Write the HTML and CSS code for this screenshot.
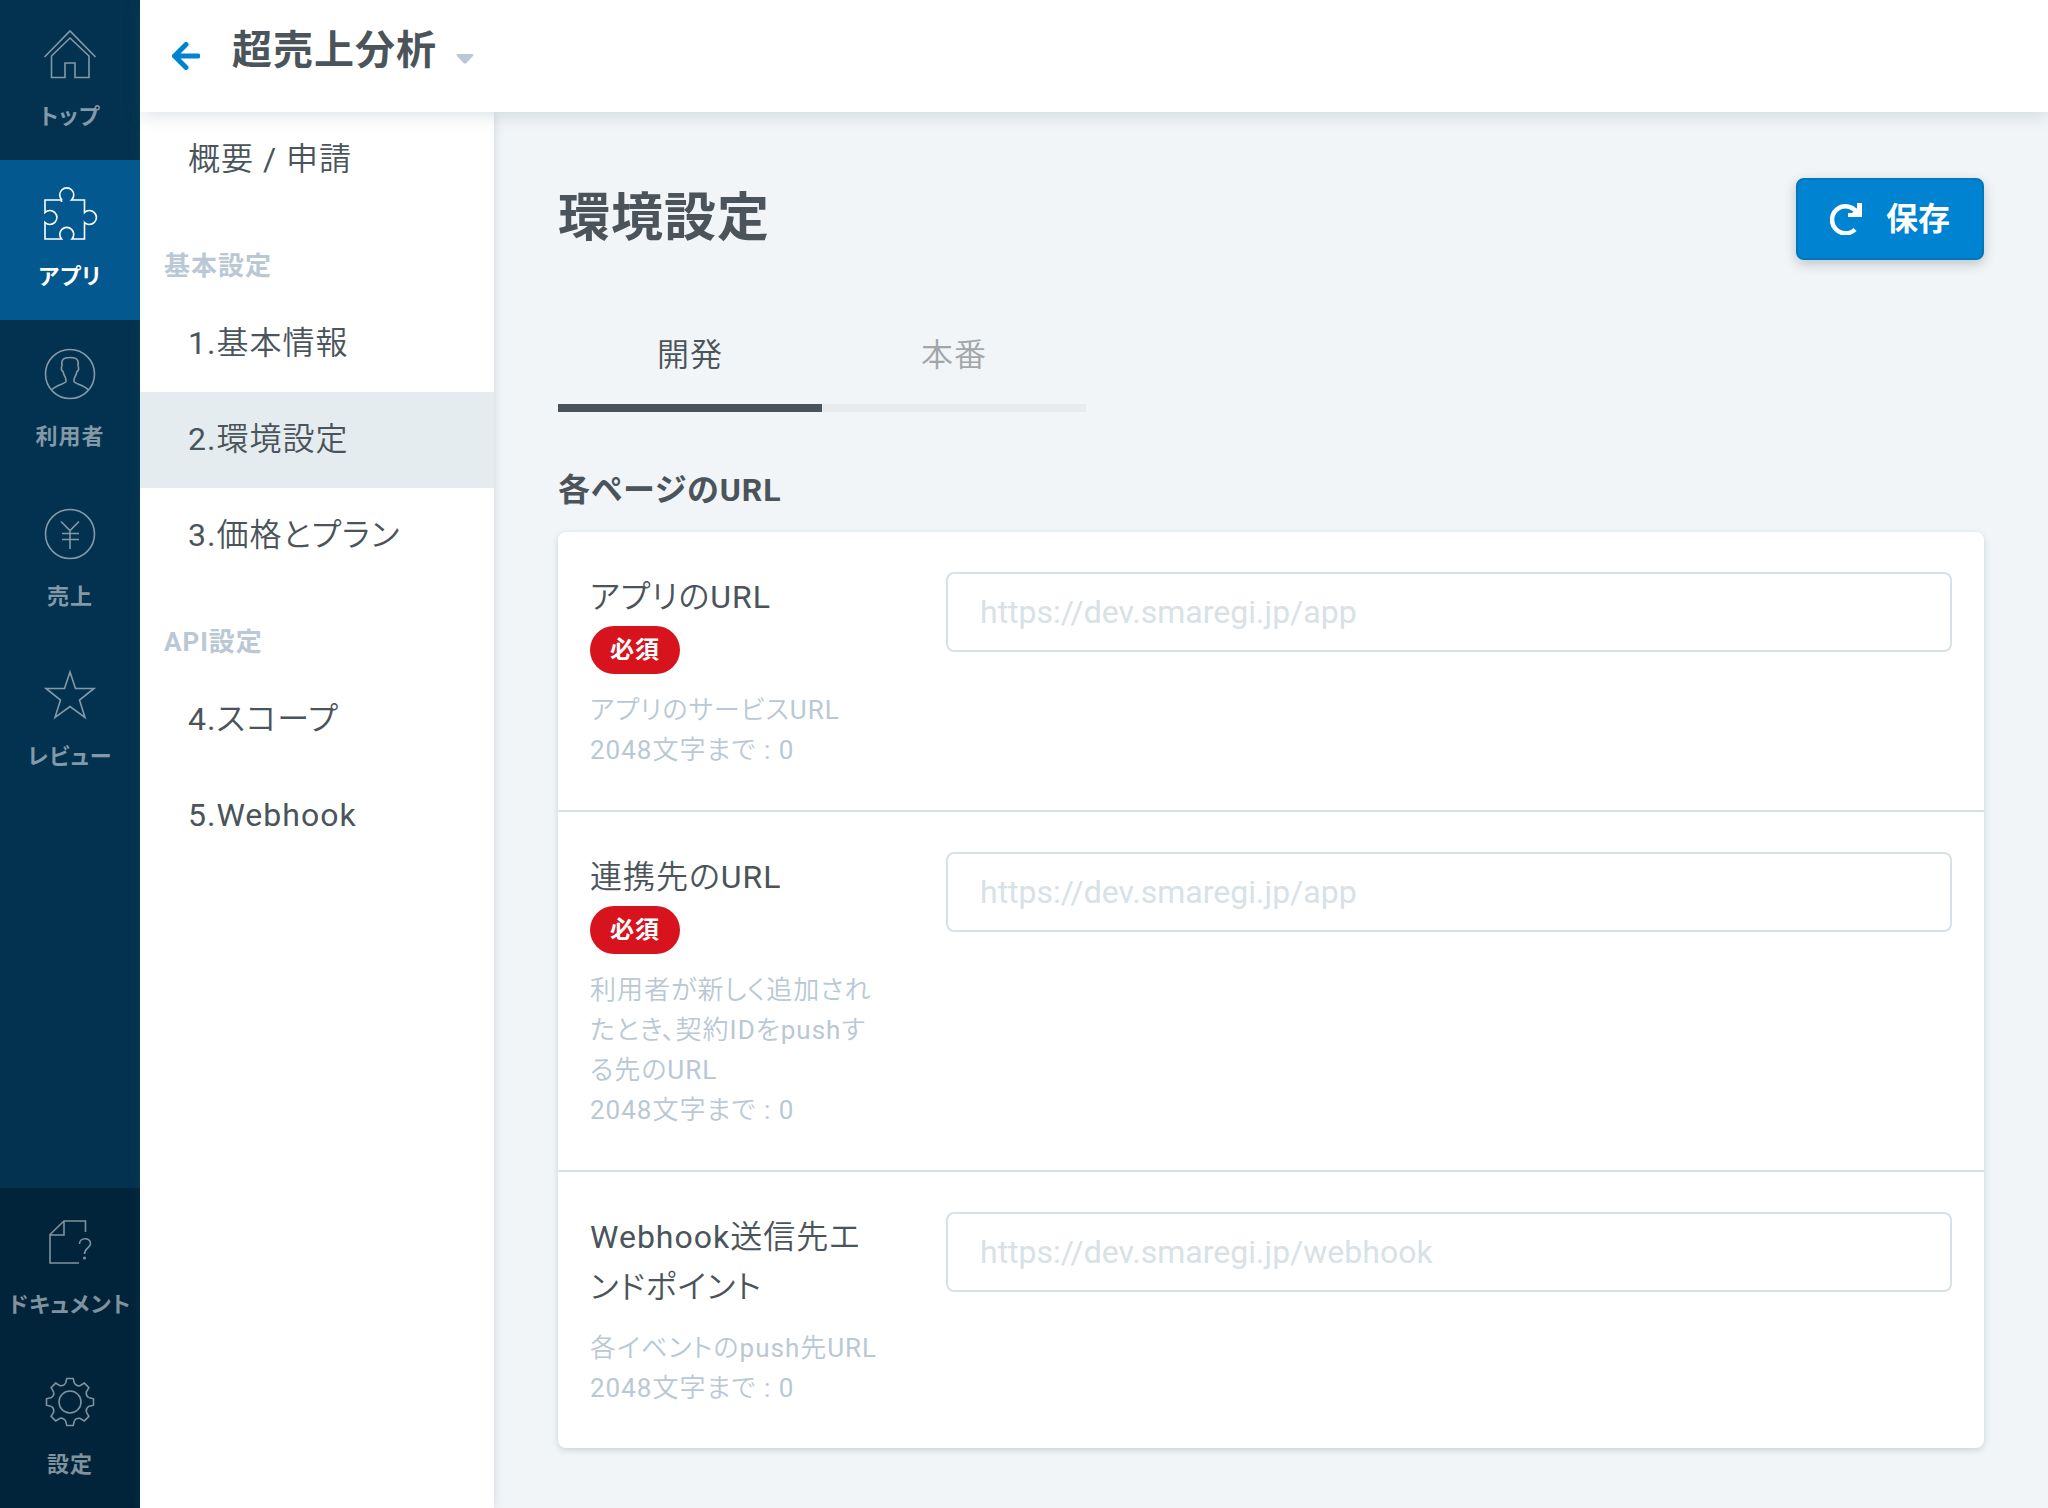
FILE: index.html
```html
<!DOCTYPE html>
<html lang="ja">
<head>
<meta charset="utf-8">
<meta name="viewport" content="width=device-width, initial-scale=1">
<title>環境設定 - 超売上分析</title>
<link rel="stylesheet" href="styles.css">
</head>
<body>
<div class="app">
  <nav class="rail" aria-label="メイン">
    <div class="rail-group">
      <a class="rail-item" href="#top">
        <svg class="rail-icon" viewBox="42 26 56 56"><path d="M44.5 57 70 31l25.500 26M51.500 56v21.500H65V63h10v14.500h14V56L70 38Z"/></svg>
        <span>トップ</span>
      </a>
      <a class="rail-item is-active" href="#apps" aria-current="page">
        <svg class="rail-icon" viewBox="42 26 56 56"><path d="M61.500 42V40H45V52.500A7 7 0 1 1 45 62.500V79H61.500A7 7 0 1 1 72 79H84.500V62.500A7 7 0 1 0 84.500 52.500V40H71.500A7 7 0 1 0 62 40"/></svg>
        <span>アプリ</span>
      </a>
      <a class="rail-item" href="#users">
        <svg class="rail-icon" viewBox="42 26 56 56"><circle cx="70" cy="54" r="24.500"/><path d="M52 69.500C56 65 65 64 66 61.500C66.500 57 64.500 58 63 51.500C61 50.500 61.500 47 62 45.500C61 40 63 37.500 70 37.500C77 37.500 79 40 78 45.500C78.500 47 79 50.500 77 51.500C75.500 58 73.500 57 74 61.500C75 64 84 65 88 69.500"/></svg>
        <span>利用者</span>
      </a>
      <a class="rail-item" href="#sales">
        <svg class="rail-icon" viewBox="42 26 56 56"><circle cx="70" cy="54" r="24.500"/><path d="M61 41.500 70 50.500 79 41.500M70 50.500V69M62 53.500H79M62 59.500H79"/></svg>
        <span>売上</span>
      </a>
      <a class="rail-item" href="#reviews">
        <svg class="rail-icon" viewBox="42 26 56 56"><path d="M70 32 75.500 48.500H94L79.500 60 85 77.500 70 66.500 55 77.500 60.500 60 46 48.500H64.500Z"/></svg>
        <span>レビュー</span>
      </a>
    </div>
    <div class="rail-group rail-group-bottom">
      <a class="rail-item" href="#docs">
        <svg class="rail-icon" viewBox="42 26 56 56"><path d="M79 75H50V46.500L64 33H85.500V44M64 33V47H50M79.500 56C79.500 49 90.500 49 90.500 55.500C90.500 60 84.500 60 84.500 66"/><circle class="dot" cx="84.500" cy="70" r="1.500"/></svg>
        <span>ドキュメント</span>
      </a>
      <a class="rail-item" href="#settings">
        <svg class="rail-icon" viewBox="-28 -28 56 56">
          <defs><path id="tooth" d="M-4.500-18.500-3.200-23.500H3.200L4.500-18.500Q7-15.500 9.900-16.300"/></defs>
          <circle r="11"/>
          <use href="#tooth"/><use href="#tooth" transform="rotate(45)"/><use href="#tooth" transform="rotate(90)"/><use href="#tooth" transform="rotate(135)"/><use href="#tooth" transform="rotate(180)"/><use href="#tooth" transform="rotate(225)"/><use href="#tooth" transform="rotate(270)"/><use href="#tooth" transform="rotate(315)"/>
        </svg>
        <span>設定</span>
      </a>
    </div>
  </nav>

  <div class="workspace">
    <header class="topbar">
      <a class="back" href="#apps" aria-label="戻る">
        <svg class="back-icon" viewBox="0 0 28 28"><path d="M14 2.500 2.500 14 14 25.500M3 14H26"/></svg>
      </a>
      <button class="app-switch" type="button" aria-haspopup="true">
        <span>超売上分析</span>
        <svg class="caret" viewBox="0 0 18 10"><path d="M1.500 0H16.500Q18 .5 17 2L10.500 9Q9 10.500 7.500 9L1 2Q0 .5 1.500 0Z"/></svg>
      </button>
    </header>

    <div class="body">
      <nav class="subnav" aria-label="アプリ設定">
        <a class="subnav-link" href="#overview">概要 / 申請</a>
        <h2 class="subnav-title">基本設定</h2>
        <a class="subnav-link" href="#basic">1.基本情報</a>
        <a class="subnav-link is-current" href="#env" aria-current="page">2.環境設定</a>
        <a class="subnav-link" href="#plan">3.価格とプラン</a>
        <h2 class="subnav-title">API設定</h2>
        <a class="subnav-link" href="#scope">4.スコープ</a>
        <a class="subnav-link" href="#webhook">5.Webhook</a>
      </nav>

      <main class="content">
        <div class="page-head">
          <h1 class="page-title">環境設定</h1>
          <button class="save" type="submit" form="env-form">
            <svg class="save-icon" viewBox="0 0 32 32"><path class="arc" d="M25 26.500A13.500 13.500 0 1 1 26.500 9"/><path class="head" d="M27 0H32V14H18V10H22L27 5Z"/></svg>
            <span>保存</span>
          </button>
        </div>

        <div class="tabs" role="tablist">
          <button class="tab is-selected" type="button" role="tab" aria-selected="true">開発</button>
          <button class="tab" type="button" role="tab" aria-selected="false">本番</button>
        </div>

        <h2 class="section-title">各ページのURL</h2>
        <form class="card" id="env-form">
          <div class="row">
            <div class="row-info">
              <label class="row-label" for="app-url">アプリのURL</label>
              <span class="badge">必須</span>
              <p class="help">アプリのサービスURL<br>2048文字まで : 0</p>
            </div>
            <input class="field" id="app-url" type="url" placeholder="https://dev.smaregi.jp/app">
          </div>
          <div class="row">
            <div class="row-info">
              <label class="row-label" for="link-url">連携先のURL</label>
              <span class="badge">必須</span>
              <p class="help">利用者が新しく追加されたとき、契約IDをpushする先のURL<br>2048文字まで : 0</p>
            </div>
            <input class="field" id="link-url" type="url" placeholder="https://dev.smaregi.jp/app">
          </div>
          <div class="row">
            <div class="row-info">
              <label class="row-label" for="hook-url">Webhook送信先エンドポイント</label>
              <p class="help">各イベントのpush先URL<br>2048文字まで : 0</p>
            </div>
            <input class="field" id="hook-url" type="url" placeholder="https://dev.smaregi.jp/webhook">
          </div>
        </form>
      </main>
    </div>
  </div>
</div>
</body>
</html>
```
FILE: styles.css
```css
:root {
  --font-text: Roboto, "Noto Sans CJK JP DemiLight", "Noto Sans CJK JP Light", "Noto Sans CJK JP", sans-serif;
  --font-strong: Roboto, "Noto Sans CJK JP", sans-serif;
}

* {
  box-sizing: border-box;
}

body {
  margin: 0;
  background: #f1f5f8;
  color: #4a545a;
  font-family: var(--font-text);
  font-size: 32px;
  font-feature-settings: "palt";
  letter-spacing: 1px;
}

a {
  color: inherit;
  text-decoration: none;
}

h1,
h2,
p {
  margin: 0;
}

button {
  border: 0;
  background: none;
  color: inherit;
  font: inherit;
  font-feature-settings: inherit;
  cursor: pointer;
}

svg {
  display: block;
  flex: none;
  fill: none;
}

.app {
  display: flex;
  min-height: 100vh;
}

/* Main navigation rail */

.rail {
  display: flex;
  flex: none;
  flex-direction: column;
  justify-content: space-between;
  width: 140px;
  background: #02324f;
  color: #8499a7;
}

.rail-group-bottom {
  background: #01243a;
  color: #80929d;
}

.rail-item {
  display: flex;
  flex-direction: column;
  align-items: center;
  gap: 19px;
  height: 160px;
  padding-top: 26px;
  font-family: var(--font-strong);
  font-size: 22px;
  font-weight: 700;
  line-height: 32px;
  white-space: nowrap;
}

.rail-item.is-active {
  background: #03598f;
  color: #fff;
}

.rail-icon {
  width: 56px;
  height: 56px;
  stroke: currentColor;
  stroke-width: 1.6;
}

.dot {
  fill: currentColor;
  stroke: none;
}

/* Top bar */

.workspace {
  display: flex;
  flex: 1;
  flex-direction: column;
  min-width: 0;
}

.topbar {
  display: flex;
  align-items: center;
  gap: 32px;
  position: relative;
  z-index: 1;
  height: 112px;
  padding: 0 32px;
  background: #fff;
  box-shadow: 0 4px 16px rgba(74, 100, 115, 0.18);
}

.back-icon {
  width: 28px;
  height: 28px;
  stroke: #0084d1;
  stroke-width: 5;
  stroke-linecap: round;
}

.app-switch {
  display: flex;
  align-items: center;
  gap: 19px;
  padding: 0 0 10px;
  font-family: var(--font-strong);
  font-size: 40px;
  font-weight: 700;
  line-height: 56px;
  letter-spacing: 1px;
}

.caret {
  width: 18px;
  height: 10px;
  margin-top: 16px;
  fill: #b9c8d4;
}

/* App settings navigation */

.body {
  display: flex;
  flex: 1;
}

.subnav {
  flex: none;
  width: 354px;
  background: #fff;
  box-shadow: 0 0 10px rgba(74, 100, 115, 0.2);
}

.subnav-link {
  display: block;
  padding: 0 48px 2px;
  line-height: 94px;
}

.subnav-link.is-current {
  background: #e5ecef;
}

.subnav-title {
  padding: 38px 24px 10px;
  color: #b9c8d4;
  font-family: var(--font-strong);
  font-size: 26px;
  font-weight: 700;
  line-height: 40px;
}

/* Page content */

.content {
  flex: 1;
  min-width: 0;
  padding: 66px 64px 60px;
}

.page-head {
  display: flex;
  align-items: center;
  justify-content: space-between;
}

.page-title {
  font-family: var(--font-strong);
  font-size: 52px;
  font-weight: 700;
  line-height: 82px;
}

.save {
  display: flex;
  align-items: center;
  gap: 24px;
  height: 82px;
  padding: 0 32px;
  border: 2px solid #0076bd;
  border-radius: 8px;
  background: #0084d1;
  box-shadow: 0 4px 12px rgba(40, 50, 60, 0.25);
  color: #fff;
  font-family: var(--font-strong);
  font-weight: 700;
  line-height: 48px;
  letter-spacing: 0;
}

.save-icon {
  width: 32px;
  height: 32px;
}

.arc {
  stroke: #fff;
  stroke-width: 4.5;
}

.head {
  fill: #fff;
}

.tabs {
  display: flex;
  margin-top: 52px;
}

.tab {
  width: 264px;
  height: 100px;
  padding: 0 0 12px;
  border-bottom: 8px solid #e8eaec;
  color: #a3a6a7;
  letter-spacing: 1px;
}

.tab.is-selected {
  border-color: #4a525a;
  color: #4a545a;
}

.section-title {
  margin: 54px 0 18px;
  font-family: var(--font-strong);
  font-size: 32px;
  font-weight: 700;
  line-height: 48px;
}

.card {
  border-radius: 8px;
  background: #fff;
  box-shadow: 0 2px 6px rgba(74, 110, 130, 0.25);
}

.row {
  display: grid;
  grid-template-columns: 288px 1fr;
  gap: 68px;
  align-items: start;
  padding: 40px 32px;
}

.row + .row {
  border-top: 2px solid #d8e1e6;
}

.row-info {
  display: flex;
  flex-direction: column;
  align-items: flex-start;
}

.row-label {
  line-height: 50px;
}

.badge {
  margin-top: 4px;
  padding: 0 20px;
  border-radius: 24px;
  background: #d7141e;
  color: #fff;
  font-family: var(--font-strong);
  font-size: 24px;
  font-weight: 700;
  line-height: 48px;
}

.help {
  margin-top: 16px;
  color: #b9c8d4;
  font-size: 26px;
  line-height: 40px;
}

.field {
  width: 100%;
  height: 80px;
  padding: 0 32px;
  border: 2px solid #d8e1e6;
  border-radius: 8px;
  background: #fff;
  color: inherit;
  font: inherit;
}

.field::placeholder {
  color: #d8e1e6;
  opacity: 1;
}
```
